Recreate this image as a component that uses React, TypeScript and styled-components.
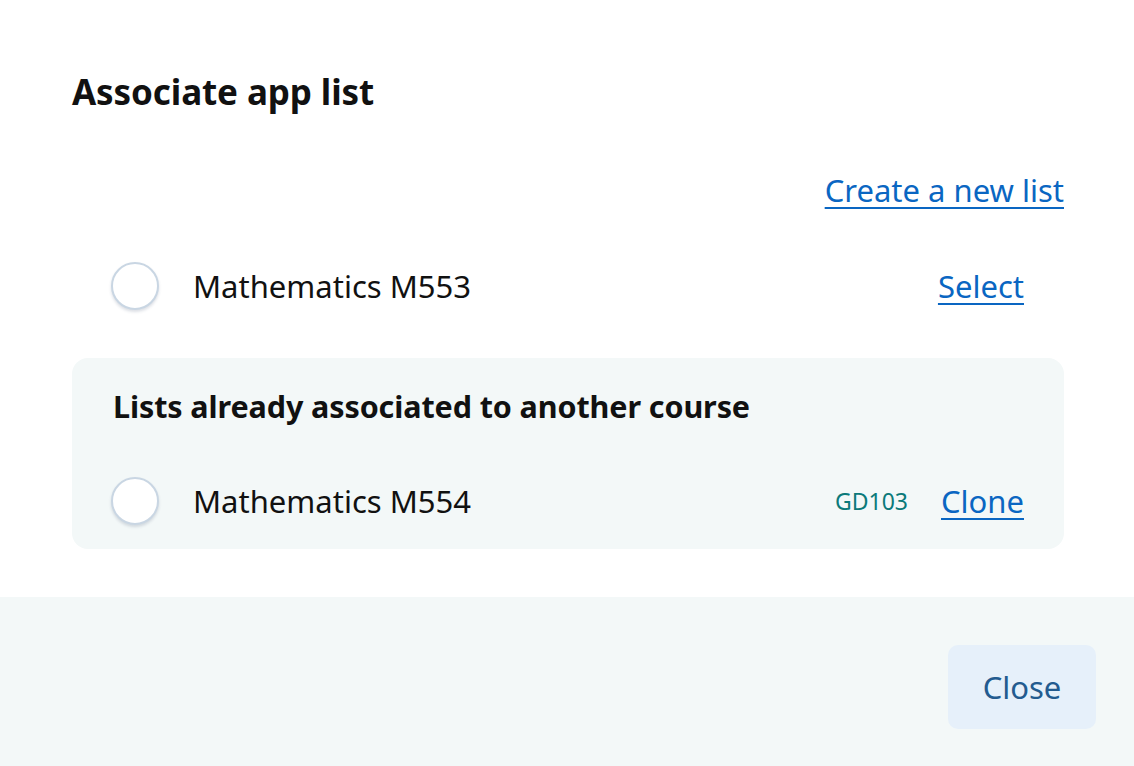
import React from "react";
import styled, { createGlobalStyle } from "styled-components";

const GlobalStyle = createGlobalStyle`
  html, body {
    margin: 0;
    padding: 0;
    background: #ffffff;
    font-family: "Noto Sans", "Open Sans", sans-serif;
    color: #111111;
  }
  #root {
    min-height: 766px;
  }
`;

type ListItem = {
  name: string;
  course?: string;
  action: string;
};

const freeLists: ListItem[] = [{ name: "Mathematics M553", action: "Select" }];
const takenLists: ListItem[] = [
  { name: "Mathematics M554", course: "GD103", action: "Clone" },
];

export default function App(): React.ReactElement {
  return (
    <>
      <GlobalStyle />
      <Dialog>
        <Body>
          <Title>Associate app list</Title>
          <LinkBar>
            <ActionLink href="#">Create a new list</ActionLink>
          </LinkBar>
          {freeLists.map((item) => (
            <Row key={item.name}>
              <Radio type="radio" name="applist" aria-label={item.name} />
              <Name>{item.name}</Name>
              <ActionLink href="#">{item.action}</ActionLink>
            </Row>
          ))}
          <Associated>
            <SubTitle>Lists already associated to another course</SubTitle>
            {takenLists.map((item) => (
              <Row key={item.name}>
                <Radio type="radio" name="applist" aria-label={item.name} />
                <Name>{item.name}</Name>
                <Course>{item.course}</Course>
                <ActionLink href="#">{item.action}</ActionLink>
              </Row>
            ))}
          </Associated>
        </Body>
        <Footer>
          <CloseButton type="button">Close</CloseButton>
        </Footer>
      </Dialog>
    </>
  );
}

const Dialog = styled.div`
  display: flex;
  flex-direction: column;
  min-height: 766px;
`;

const Body = styled.div`
  display: flex;
  flex-direction: column;
  padding: 70px 70px 48px 72px;
`;

const Title = styled.h1`
  margin: 0;
  font-size: 35px;
  line-height: 44px;
  font-weight: 700;
  letter-spacing: -0.1px;
`;

const LinkBar = styled.div`
  display: flex;
  justify-content: flex-end;
  margin-top: 58px;
  margin-bottom: 30px;
`;

const ActionLink = styled.a`
  color: #0a66c2;
  font-size: 31px;
  line-height: 36px;
  text-decoration: underline;
  text-decoration-thickness: 2px;
  text-underline-offset: 5px;
`;

const Row = styled.div`
  display: flex;
  align-items: center;
  height: 96px;
  padding: 0 40px 0 39px;
`;

const Radio = styled.input`
  appearance: none;
  margin: 0;
  width: 48px;
  height: 48px;
  border-radius: 50%;
  border: 2px solid #c9d6e3;
  background: #ffffff;
  box-shadow: 0 2px 3px rgba(60, 80, 110, 0.18);
  flex-shrink: 0;
`;

const Name = styled.span`
  flex: 1;
  margin-left: 34px;
  font-size: 31px;
  line-height: 36px;
  color: #111111;
`;

const Course = styled.span`
  margin-right: 33px;
  font-size: 23px;
  color: #0b7a7a;
`;

const Associated = styled.section`
  display: flex;
  flex-direction: column;
  margin-top: 24px;
  padding-top: 34px;
  background: #f3f8f8;
  border-radius: 16px;
`;

const SubTitle = styled.h2`
  margin: 0 0 33px 41px;
  font-size: 30.5px;
  line-height: 28px;
  font-weight: 700;
  letter-spacing: -0.1px;
`;

const Footer = styled.div`
  flex: 1;
  display: flex;
  justify-content: flex-end;
  align-items: flex-start;
  padding: 48px 38px 36px 0;
  background: #f3f8f8;
`;

const CloseButton = styled.button`
  width: 148px;
  height: 84px;
  border: none;
  border-radius: 10px;
  background: #e6f0fa;
  color: #235b8f;
  font-family: "Noto Sans", "Open Sans", sans-serif;
  font-size: 31px;
`;
